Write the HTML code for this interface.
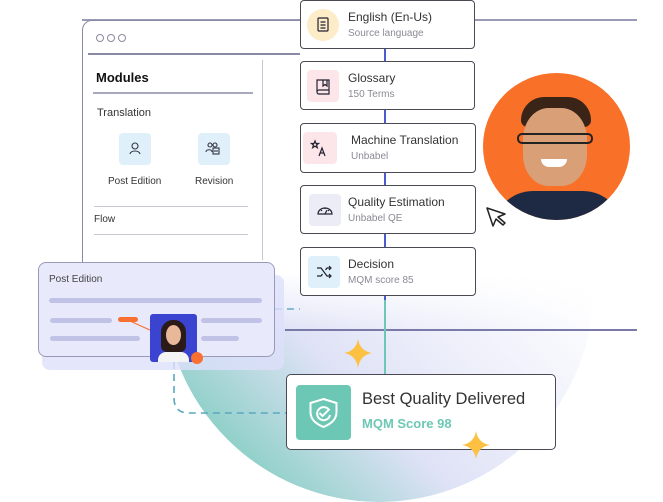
<!DOCTYPE html><html><head><style>
*{margin:0;padding:0;box-sizing:border-box}
body{width:663px;height:496px;overflow:hidden;background:#fff;font-family:"Liberation Sans",sans-serif;position:relative;color:#333}
.a{position:absolute}
.card{position:absolute;left:300px;width:175px;height:49px;background:#fff;border:1.3px solid #4a4a55;border-radius:4px}
.card .ic{position:absolute;left:6px;top:8px;width:32px;height:32px;border-radius:4px}
.card .t{position:absolute;left:47px;top:9px;font-size:12px;color:#333}
.card .s{position:absolute;left:47px;top:27px;font-size:10px;color:#8a8a95}
.bar{position:absolute;height:5px;border-radius:3px;background:#c0c2e6}
</style></head><body>
<div class="a" style="left:164px;top:72px;width:430px;height:430px;border-radius:50%;background:linear-gradient(225deg,rgba(255,255,255,0) 25%,#eceefa 50%,#dfe2f6 65%,#6cc8b4 95%);-webkit-mask-image:linear-gradient(180deg,transparent 200px,#000 260px);mask-image:linear-gradient(180deg,transparent 200px,#000 260px)"></div>
<div class="a" style="left:82px;top:19px;width:555px;height:1.5px;background:#9a9ab8"></div>
<div class="a" style="left:285px;top:329px;width:352px;height:1.5px;background:#7a7aa8"></div>
<div class="a" style="left:82px;top:20px;width:230px;height:260px;border:1.5px solid #8a8aa0;border-right:none;border-bottom:none;border-radius:10px 0 0 0"></div>
<div class="a" style="left:88px;top:53px;width:212px;height:1.5px;background:#8a8aa8"></div>
<div class="a" style="left:96px;top:34px;width:8px;height:8px;border:1.3px solid #8a8aa0;border-radius:50%"></div>
<div class="a" style="left:107px;top:34px;width:8px;height:8px;border:1.3px solid #8a8aa0;border-radius:50%"></div>
<div class="a" style="left:118px;top:34px;width:8px;height:8px;border:1.3px solid #8a8aa0;border-radius:50%"></div>
<div class="a" style="left:262px;top:60px;width:1.3px;height:200px;background:#c8c8d4"></div>
<div class="a" style="left:96px;top:70px;font-size:13px;font-weight:bold;color:#111">Modules</div>
<div class="a" style="left:93px;top:92px;width:160px;height:1.5px;background:#a8a8c0"></div>
<div class="a" style="left:97px;top:107px;font-size:11px">Translation</div>
<div class="a" style="left:119px;top:133px;width:32px;height:32px;background:#dff0fb;border-radius:4px"><svg width="32" height="32"><g fill="none" stroke="#334" stroke-width="1.1"><circle cx="16" cy="13" r="3"/><path d="M11 21c1-4 9-4 10 0"/></g></svg></div>
<div class="a" style="left:198px;top:133px;width:32px;height:32px;background:#dff0fb;border-radius:4px"><svg width="32" height="32"><g fill="none" stroke="#334" stroke-width="1.1"><circle cx="12" cy="12" r="2"/><circle cx="17" cy="12" r="2"/><path d="M8 19c0-3 6-3 6 0"/><rect x="15" y="15" width="6" height="6"/><path d="M16 18h4"/></g></svg></div>
<div class="a" style="left:108px;top:176px;font-size:10px">Post Edition</div>
<div class="a" style="left:195px;top:176px;font-size:10px">Revision</div>
<div class="a" style="left:94px;top:206px;width:154px;height:1.3px;background:#c8c8d4"></div>
<div class="a" style="left:94px;top:214px;font-size:10px">Flow</div>
<div class="a" style="left:94px;top:234px;width:154px;height:1.3px;background:#c8c8d4"></div>
<svg class="a" style="left:0;top:0" width="663" height="496"><g fill="none" stroke-width="1.6" stroke-dasharray="7 5"><path d="M275 309H300" stroke="#6aa8c8"/><path d="M174 362V398q0 15 15 15H286" stroke="#5aa8c0"/></g><path d="M385 0V374" stroke="#4a5bd0" stroke-width="2"/><path d="M385 300V374" stroke="#6cc8b4" stroke-width="2"/></svg>
<div class="a" style="left:42px;top:275px;width:242px;height:95px;background:#dde0fa;border-radius:8px;opacity:.8"></div>
<div class="a" style="left:38px;top:262px;width:237px;height:95px;background:#e8eafc;border:1.3px solid #9a9ab8;border-radius:8px"></div>
<div class="a" style="left:49px;top:274px;font-size:10px;color:#444">Post Edition</div>
<div class="bar" style="left:49px;top:298px;width:213px"></div>
<div class="bar" style="left:50px;top:318px;width:62px"></div>
<div class="bar" style="left:118px;top:317px;width:20px;background:#f97030"></div>
<div class="bar" style="left:50px;top:336px;width:90px"></div>
<div class="bar" style="left:201px;top:318px;width:61px"></div>
<div class="bar" style="left:201px;top:336px;width:38px"></div>
<svg class="a" style="left:0;top:0" width="663" height="496"><path d="M130 321L152 331" stroke="#f97030" stroke-width="1.2"/></svg>
<div class="a" style="left:150px;top:314px;width:47px;height:48px;background:#3a44d0;border-radius:3px;overflow:hidden"><div class="a" style="left:11px;top:6px;width:25px;height:32px;background:#2a1a18;border-radius:12px 12px 6px 6px"></div><div class="a" style="left:16px;top:11px;width:15px;height:20px;background:#e8b898;border-radius:50%"></div><div class="a" style="left:8px;top:38px;width:31px;height:14px;background:#f4f4f4;border-radius:8px 8px 0 0"></div></div>
<div class="a" style="left:191px;top:352px;width:12px;height:12px;background:#f97030;border-radius:50%"></div>
<div class="card" style="top:0"><div class="ic" style="background:#fdecc8;border-radius:50%"><svg width="32" height="32"><g fill="none" stroke="#223" stroke-width="1.2"><rect x="11" y="9" width="10" height="13" rx="1"/><path d="M13.5 13h5M13.5 16h5M13.5 19h5"/></g></svg></div><div class="t">English (En-Us)</div><div class="s">Source language</div></div>
<div class="card" style="top:61px"><div class="ic" style="background:#fde6ea"><svg width="32" height="32"><g fill="none" stroke="#223" stroke-width="1.2"><path d="M10 22V10h12v10H12a2 2 0 0 0 0 4h10v-4"/><path d="M16 10v6l2-1.5 2 1.5v-6"/></g></svg></div><div class="t">Glossary</div><div class="s">150 Terms</div></div>
<div class="card" style="top:123px;height:50px;width:176px"><div class="ic" style="left:2px;width:34px;background:#fde6ea"><svg width="34" height="32"><g fill="none" stroke="#223" stroke-width="1.2"><path d="M12 9l1 2.5h2.5l-2 1.6.8 2.6-2.3-1.6-2.3 1.6.8-2.6-2-1.6h2.5z"/><path d="M16 24l3-8 3 8M17.2 21h3.6"/></g></svg></div><div class="t" style="left:50px">Machine Translation</div><div class="s" style="left:50px">Unbabel</div></div>
<div class="card" style="top:185px;width:176px"><div class="ic" style="left:8px;background:#ececf6"><svg width="32" height="32"><g fill="none" stroke="#223" stroke-width="1.2"><path d="M9 20a7 6 0 0 1 14 0z"/><path d="M16 20l2-4M12 16l1 1M20 16l-1 1M16 14v1"/></g></svg></div><div class="t">Quality Estimation</div><div class="s">Unbabel QE</div></div>
<div class="card" style="top:247px;width:176px"><div class="ic" style="left:7px;background:#dff0fb"><svg width="32" height="32"><g fill="none" stroke="#223" stroke-width="1.2"><path d="M9 12h4l6 8h4M9 20h4l1.5-2M17.5 14l1.5-2h4M21 10l2 2-2 2M21 18l2 2-2 2"/></g></svg></div><div class="t">Decision</div><div class="s">MQM score 85</div></div>
<div class="a" style="left:483px;top:73px;width:147px;height:147px;background:#f97028;border-radius:50%;overflow:hidden"><div class="a" style="left:38px;top:24px;width:70px;height:30px;background:#3a2418;border-radius:35px 35px 10px 10px"></div><div class="a" style="left:40px;top:35px;width:64px;height:78px;background:#d9a078;border-radius:40%"></div><div class="a" style="left:34px;top:60px;width:76px;height:11px;border:2px solid #222;border-radius:5px"></div><div class="a" style="left:58px;top:86px;width:26px;height:8px;background:#fff;border-radius:0 0 10px 10px"></div><div class="a" style="left:10px;top:118px;width:130px;height:40px;background:#1e2a44;border-radius:40px 40px 0 0"></div></div>
<svg class="a" style="left:485px;top:206px" width="24" height="24"><path d="M2 2L8 20L11 13L18 19L20 17L13 11L20 8Z" fill="#fff" stroke="#222" stroke-width="1.5" stroke-linejoin="round"/></svg>
<div class="a" style="left:286px;top:374px;width:270px;height:76px;background:#fff;border:1.3px solid #4a4a55;border-radius:5px"></div>
<div class="a" style="left:296px;top:385px;width:55px;height:55px;background:#6cc8b4;border-radius:4px"><svg width="55" height="55"><g fill="none" stroke="#fff" stroke-width="2"><path d="M27.5 14l13 4v9c0 8-6 12-13 15-7-3-13-7-13-15v-9z"/><path d="M33 25a6.5 6.5 0 1 0 1 5"/><path d="M23.5 28l3 3 7-7"/></g></svg></div>
<div class="a" style="left:362px;top:390px;font-size:16.5px;color:#333">Best Quality Delivered</div>
<div class="a" style="left:362px;top:416px;font-size:13px;color:#6cc8b4;font-weight:bold">MQM Score 98</div>
<svg class="a" style="left:0;top:0" width="663" height="496"><g fill="#fcc042"><path d="M358 339Q360 351 372 353Q360 355 358 368Q356 355 344 353Q356 351 358 339Z"/><path d="M476 431Q478 443 490 445Q478 447 476 459Q474 447 462 445Q474 443 476 431Z"/></g></svg>
</body></html>
